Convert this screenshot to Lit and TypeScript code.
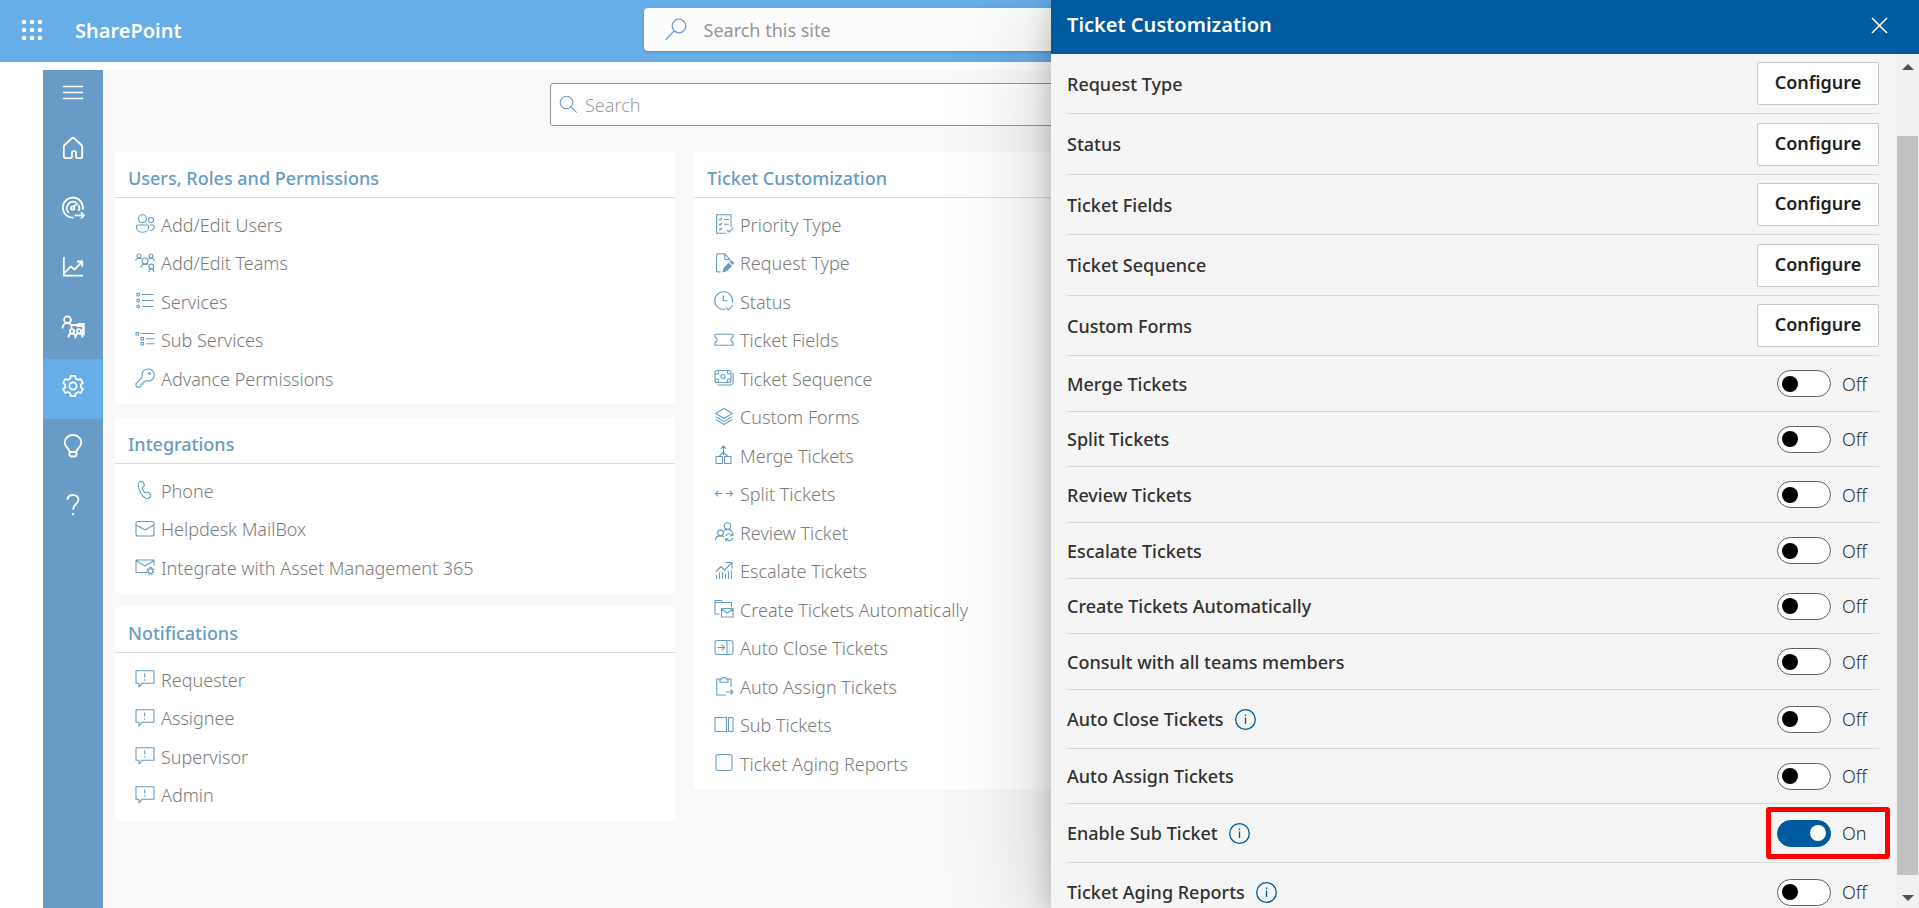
import { LitElement, html, css, svg, nothing } from "lit";
import { customElement, property, state } from "lit/decorators.js";
import { classMap } from "lit/directives/class-map.js";

/** Closed outline of a cog wheel with evenly spaced teeth. */
function cog(cx: number, cy: number, outer: number, inner: number, teeth: number, tip: number, root: number): string {
  const points: string[] = [];
  for (let i = 0; i < teeth; i++) {
    const mid = -90 + (360 / teeth) * i;
    for (const [offset, radius] of [[-root, inner], [-tip, outer], [tip, outer], [root, inner]]) {
      const a = ((mid + offset) * Math.PI) / 180;
      points.push(`${(cx + radius * Math.cos(a)).toFixed(2)} ${(cy + radius * Math.sin(a)).toFixed(2)}`);
    }
  }
  return `M${points.join("L")}Z`;
}

const icons: Record<string, unknown> = {
  menu: svg`<path d="M2 5.500h20M2 11.500h20M2 17.500h20"/>`,
  home: svg`<path d="M2.800 10.800c0-.7.3-1.300.8-1.800l7-6.500a2 2 0 0 1 2.800 0l7 6.500c.5.5.8 1.100.8 1.800v9.700a1.600 1.600 0 0 1-1.600 1.600h-3a1.600 1.600 0 0 1-1.600-1.600v-4.200a1.200 1.200 0 0 0-1.200-1.200h-1.600a1.200 1.200 0 0 0-1.200 1.200v4.200a1.600 1.600 0 0 1-1.600 1.600H4.400a1.600 1.600 0 0 1-1.600-1.600z"/>`,
  gauge: svg`<path d="M12.500 21.600A10 10 0 1 1 21.600 13.800"/><path d="M7.800 16.800a6.400 6.400 0 0 1 7.400-10.300M17.400 8.800a6.400 6.400 0 0 1 .3 6"/><circle cx="11.600" cy="12" r="1.700"/><path d="M12.900 10.700l3.800-3.900M13.500 19.300h9.500M20 16.300l3 3-3 3"/>`,
  trend: svg`<path d="M2.800 2v18.700H22M3.500 18l6.200-6.500 3.700 3 7.600-7.700M16 6.500h5.300v5.300"/>`,
  training: svg`<circle cx="6.500" cy="4.800" r="3.400"/><path d="M1.500 13.500c0-3 2-5.300 5-5.300 1.500 0 2.700.5 3.500 1.500M10.500 13.500v-3.500h6M17 9h5.800v11.500M17 9l-1 2h6M22 11v9"/><circle cx="11" cy="16.300" r="2.100"/><circle cx="18" cy="16.300" r="2.100"/><path d="M7.500 22.500c0-2.500 1.500-4 3.500-4s3.500 1.500 3.500 4c0-2.500 1.500-4 3.500-4s3.500 1.500 3.500 4"/>`,
  settings: svg`<path d=${cog(12, 12, 10.4, 8, 6, 13, 19)}/><circle cx="12" cy="12" r="3.600"/>`,
  bulb: svg`<path d="M8.500 17.500c0-3-4.800-4.300-4.800-9a8.300 7.500 0 0 1 16.600 0c0 4.700-4.800 6-4.800 9v3a2 2 0 0 1-2 2h-3a2 2 0 0 1-2-2zM8.500 18h7"/>`,
  help: svg`<path d="M6.500 6.800C6.500 3.800 8.800 2 12 2s5.500 1.900 5.500 4.700c0 4.500-5.500 4.500-5.500 9.800M12 20v2.200"/>`,
  waffle: svg`<g fill="currentColor" stroke="none">${[4, 12, 20].map((y) => [4, 12, 20].map((x) => svg`<circle cx=${x} cy=${y} r="2.300"/>`))}</g>`,
  siteSearch: svg`<circle cx="15" cy="8" r="6.800"/><path d="M10 13L1.500 22"/>`,
  search: svg`<circle cx="7.500" cy="7.500" r="6.300"/><path d="M12.200 12.200l5.500 5.500"/>`,
  close: svg`<path d="M2 2l15 15M17 2L2 17"/>`,

  users: svg`<circle cx="7.500" cy="4.800" r="4"/><circle cx="16" cy="6" r="2.500"/><path d="M2.700 11h9.600c.8 0 1.400.6 1.400 1.400 0 3.400-2.600 5.800-6.200 5.800s-6.200-2.400-6.200-5.800c0-.8.6-1.400 1.400-1.400zM15 11h3c.8 0 1.300.5 1.300 1.200 0 2.800-1.600 4.500-4.300 4.300"/>`,
  teams: svg`<circle cx="4" cy="3" r="2"/><circle cx="16" cy="3" r="2"/><path d="M.8 8c0-2 1.300-3 3.200-3 1.200 0 2 .4 2.500 1M19.200 8c0-2-1.300-3-3.200-3-1.200 0-2 .4-2.500 1M6 15c0-2.200 1.500-3.800 4-3.800s2.500.5 3 1"/><circle cx="10" cy="8" r="3"/><circle cx="16.300" cy="13.500" r="2.400"/><path d="M14 19v-1.500c0-1 .9-1.600 2.300-1.600s2.300.6 2.300 1.600V19"/>`,
  services: svg`<circle cx="3.200" cy="3.500" r="1.400"/><circle cx="3.200" cy="9.500" r="1.400"/><circle cx="3.200" cy="15.500" r="1.400"/><path d="M7 3.500h11.500M7 9.500h11.500M7 15.500h11.500"/>`,
  subServices: svg`<path d="M1 2.500h2.500V5H1zM6 7.500h2.500V10H6zM6 12.500h2.500V15H6zM5.500 3.500H19.500M11 8.700h8.500M11 13.700h8.500"/>`,
  key: svg`<path d="M13 1a6 6 0 1 1-1.800 11.600L9.500 14H8v2H6v2.200l-1 .9H2.500a1.500 1.500 0 0 1-1.500-1.500v-2l6.300-6.400A6 6 0 0 1 13 1z"/><circle cx="14.500" cy="5.600" r=".8"/>`,
  phone: svg`<path d="M5.300 1.600l1-.3c.8-.2 1.500.1 1.900.9l1 2.200c.3.700.1 1.500-.4 2L7.300 7.800c0 1.200 1.500 4.200 2.800 5l2-.6c.7-.2 1.400 0 1.900.6l1.400 2c.5.700.4 1.600-.2 2.200l-.8.800c-.9.900-2.300 1.200-3.500.7C6.700 16.500 3 9.500 3.300 4.400c.1-1.300.9-2.400 2-2.800z"/>`,
  mail: svg`<rect x="1" y="2.500" width="18" height="14.500" rx="2"/><path d="M1 6l9 5 9-5"/>`,
  mailSettings: svg`<path d="M19 8.500V3H1v12.500h11M1 3.500l9 5.500 9-5.500"/><circle cx="15.500" cy="14" r="2.400"/><path stroke-dasharray="1.500 1.450" d="M15.500 10.300a3.700 3.700 0 1 1-.01 0"/>`,
  alert: svg`<path d="M1 1.800h18v12.500H7L4 18v-3.700H1z"/><path d="M9.700 4.500v4M9.700 10.300v1.500"/>`,
  checklist: svg`<path d="M17 13V.8H2.600v18.400H12M5 5.200l1 1 2-2M5 10l1 1 2-2M5 15l1 1 2-2M10 5.500h5M10 10.300h5M13 16l2 2 4.300-4.300"/>`,
  documentEdit: svg`<path d="M6.500 19H4.500a2 2 0 0 1-2-2V2.800a2 2 0 0 1 2-2h6.200L16 6.500v1.800M10.700.8v4.300c0 .8.600 1.400 1.400 1.400H16"/><path fill="currentColor" stroke="none" d="M8.500 19.500l1.200-4.700 5-5 3.300 3.300-5 5zM15.600 9l1.200-1.100c.9-.8 2.200.4 2.700 1s.7 1.500 0 2.200l-.8.900z"/>`,
  clock: svg`<path d="M18.300 11.700A8.900 8.900 0 1 0 11 18.400M9.300 4.500v5.200h4M12 16.500l2.300 2.300 4.700-4.700"/>`,
  ticket: svg`<path d="M1 4.300h18v3.200c-1.300 0-2 1.100-2 2.200s.7 2.300 2 2.300v3.200H1V12c1.300 0 2-1.200 2-2.300s-.7-2.200-2-2.200z"/>`,
  money: svg`<rect x="1" y="2.500" width="16" height="12" rx="2"/><circle cx="9" cy="8.500" r="2"/><path d="M1 6h2c1 0 1.500-.6 1.500-1.500v-2M13.500 2.500v2c0 .9.500 1.500 1.500 1.500h2M1 11h2c1 0 1.500.6 1.500 1.500v2M13.500 14.500v-2c0-.9.500-1.500 1.500-1.500h2M3.500 17h12.300c2 0 3.400-1.400 3.400-3.400V5"/>`,
  layers: svg`<path d="M10 1.500l8.300 5-8.300 5-8.300-5zM1.700 9.600l8.300 5 8.300-5M1.700 12.500l8.300 5 8.300-5"/>`,
  merge: svg`<path d="M2 11.500h6.500v7H2zM10.500 11.500H17v7h-6.500zM9.500 10V1M6.700 3.800L9.500 1l2.800 2.800M5 11.500l4.500-4.300 4.500 4.300"/>`,
  split: svg`<path d="M8.500 9.500H1.500M4.300 6.700L1.500 9.500l2.800 2.800M11.500 9.500h7M15.700 6.700l2.800 2.800-2.800 2.800"/>`,
  review: svg`<circle cx="13.500" cy="4" r="3.200"/><circle cx="6.500" cy="11" r="2.900"/><path d="M1.500 18.500c0-2.800 2-4.600 5-4.600 1.600 0 2.700.5 3.500 1.300M10 8.500c1-.8 2.200-1.100 3.500-1.100 2.400 0 4.500 1.300 5 3.500M11.600 14c.8-1.500 2.100-2.200 3.700-2.200 1.400 0 2.400.5 3.300 1.500M18.900 11v2.600h-2.600M19 16c-.7 1.600-2 2.700-3.800 2.700-1.300 0-2.400-.6-3.200-1.500M11.700 19.500v-2.600h2.600"/>`,
  escalate: svg`<path d="M2 10.500l5-5 3.500 3.500L18 1.600M11.500 1.500h6.600v6.300M2.500 14v4M5.500 11.500V18M8.500 11.500V18M11.500 13V18M14.500 10.500V18M17.500 9.500V18"/>`,
  folderMail: svg`<path d="M5.500 15H1V1.500h6.500l1.500 2h8.500v5M1 3.500h8M7.500 9.500H19V18H7.500zM7.500 10l5.700 4 5.700-4"/>`,
  panelArrow: svg`<rect x="1" y="2.500" width="18" height="14" rx="2.500"/><path d="M13 2.500v14M3.500 9.500h7M7.700 6.700l2.800 2.800-2.800 2.800"/>`,
  clipboardArrow: svg`<path d="M12 19H2.800V3H6M14 3h3v8M6 3h1.800a2.300 2.300 0 0 1 4.400 0H14v3.200H6zM11.500 16H19M16.500 13.500L19 16l-2.500 2.500"/>`,
  sidePanel: svg`<path d="M1 2.500h11.500v14H1zM14.500 2.500H19v14h-4.500z"/>`,
  square: svg`<rect x="2" y="1.500" width="16" height="16" rx="2.500"/>`,
};

@customElement("app-icon")
class AppIcon extends LitElement {
  @property() name = "";
  @property({ type: Number }) box = 20;
  @property({ type: Number }) stroke = 1.1;

  static styles = css`
    :host {
      display: block;
      flex: none;
      line-height: 0;
    }
    svg {
      fill: none;
      stroke: currentColor;
      stroke-linejoin: round;
      overflow: visible;
    }
  `;

  render() {
    return html`<svg width=${this.box} height=${this.box} viewBox="0 0 ${this.box} ${this.box}" stroke-width=${this.stroke} aria-hidden="true">
      ${icons[this.name]}
    </svg>`;
  }
}

interface Entry {
  icon: string;
  label: string;
}
interface Group {
  title: string;
  entries: Entry[];
}

@customElement("settings-card")
class SettingsCard extends LitElement {
  @property({ attribute: false }) group!: Group;

  static styles = css`
    :host {
      display: block;
      background: #fff;
    }
    h2 {
      margin: 0;
      padding: 8px 13px 0;
      border-bottom: 1px solid #dcdcdc;
      font-size: 18px;
      font-weight: 500;
      line-height: 37px;
      color: #669cc5;
    }
    ul {
      list-style: none;
      margin: 0;
      padding: 7px 0;
    }
    li {
      height: 38px;
      padding-left: 20px;
      display: flex;
    }
    li:nth-child(even) {
      height: 39px;
    }
    a {
      display: flex;
      align-items: center;
      gap: 6px;
      color: #7c7c7c;
      font-weight: 300;
      text-decoration: none;
      white-space: nowrap;
    }
    span {
      padding-top: 1px;
    }
    app-icon {
      color: #669cc5;
    }
  `;

  render() {
    return html`
      <h2>${this.group.title}</h2>
      <ul>
        ${this.group.entries.map(
          (e) => html`<li><a href="#"><app-icon name=${e.icon}></app-icon><span>${e.label}</span></a></li>`
        )}
      </ul>
    `;
  }
}

interface Setting {
  label: string;
  kind: "configure" | "toggle";
  on?: boolean;
  info?: boolean;
  marked?: boolean;
}

@customElement("settings-panel")
class SettingsPanel extends LitElement {
  @state() private settings: Setting[] = [
    ...["Request Type", "Status", "Ticket Fields", "Ticket Sequence", "Custom Forms"].map(
      (label): Setting => ({ label, kind: "configure" })
    ),
    { label: "Merge Tickets", kind: "toggle" },
    { label: "Split Tickets", kind: "toggle" },
    { label: "Review Tickets", kind: "toggle" },
    { label: "Escalate Tickets", kind: "toggle" },
    { label: "Create Tickets Automatically", kind: "toggle" },
    { label: "Consult with all teams members", kind: "toggle" },
    { label: "Auto Close Tickets", kind: "toggle", info: true },
    { label: "Auto Assign Tickets", kind: "toggle" },
    { label: "Enable Sub Ticket", kind: "toggle", info: true, on: true, marked: true },
    { label: "Ticket Aging Reports", kind: "toggle", info: true },
  ];

  static styles = css`
    :host {
      display: flex;
      flex-direction: column;
      background: #f5f5f5;
      color: #323130;
      box-shadow: 0 26px 100px rgba(0, 0, 0, 0.22), 0 5px 24px rgba(0, 0, 0, 0.2);
    }
    .header {
      flex: none;
      height: 54px;
      box-sizing: border-box;
      padding: 0 27px 4px 16px;
      display: flex;
      align-items: center;
      justify-content: space-between;
      background: #005a9e;
      color: #fff;
    }
    h1 {
      margin: 0;
      font-size: 20px;
      font-weight: 600;
      line-height: 28px;
    }
    .close {
      border: 0;
      background: none;
      color: inherit;
      padding: 3px;
    }
    .body {
      flex: 1;
      min-height: 0;
      display: flex;
    }
    ul {
      flex: 1;
      list-style: none;
      margin: 0;
      padding: 0 16px;
      overflow: hidden;
    }
    .row {
      display: flex;
      align-items: center;
      justify-content: space-between;
      box-sizing: border-box;
      height: 56px;
      border-bottom: 1px solid #d8d8d8;
    }
    .row:nth-child(3n + 1) {
      height: 55px;
    }
    .row.info {
      height: 59px;
    }
    .row.configure {
      height: 60px;
    }
    .row.configure:nth-child(even) {
      height: 61px;
    }
    .name {
      display: flex;
      align-items: center;
      gap: 11px;
      font-weight: 500;
    }
    .configure-button {
      width: 122px;
      height: 43px;
      padding: 0 0 3px;
      border: 1px solid #c8c8c8;
      border-radius: 2px;
      background: #fff;
      color: #201f1e;
      font: inherit;
      font-weight: 600;
    }
    .info-button {
      display: block;
      padding: 0;
      border: 0;
      background: none;
      color: #005a9e;
    }
    .info-button svg {
      display: block;
      fill: none;
      stroke: currentColor;
    }
    .control {
      position: relative;
      width: 102px;
      display: flex;
      align-items: center;
      gap: 11px;
      font-weight: 300;
    }
    .switch {
      appearance: none;
      flex: none;
      display: flex;
      align-items: center;
      box-sizing: border-box;
      width: 54px;
      height: 27px;
      margin: 0;
      padding: 0 4px;
      border: 1px solid #605e5c;
      border-radius: 14px;
      background: #fff;
    }
    .switch::before {
      content: "";
      width: 16px;
      height: 16px;
      border-radius: 50%;
      background: #000;
    }
    .switch:checked {
      justify-content: flex-end;
      background: #005a9e;
      border-color: #005a9e;
    }
    .switch:checked::before {
      background: #fff;
    }
    .marker {
      position: absolute;
      inset: -13px -11px -12px;
      border: 5px solid #fe0000;
      border-radius: 3px;
      pointer-events: none;
    }
    .scrollbar {
      flex: none;
      width: 24px;
      box-sizing: border-box;
      padding: 0 1px 0 2px;
      display: grid;
      grid-template-rows: 26px 56fr 739fr 12fr 21px;
      justify-items: center;
      align-items: center;
      background: #f1f1f1;
      color: #505050;
    }
    .thumb {
      grid-row: 3;
      justify-self: stretch;
      align-self: stretch;
      background: #c1c1c1;
    }
    .arrow {
      fill: currentColor;
    }
    .down {
      grid-row: 5;
    }
  `;

  private flip(index: number) {
    this.settings = this.settings.map((s, i) => (i === index ? { ...s, on: !s.on } : s));
  }

  private renderRow(s: Setting, i: number) {
    const id = `setting-${i}`;
    return html`<li class=${classMap({ row: true, configure: s.kind === "configure", info: !!s.info })}>
      <div class="name">
        <label for=${id}>${s.label}</label>
        ${s.info
          ? html`<button class="info-button" aria-label="About this setting">
              <svg width="21" height="21" viewBox="0 0 21 21" stroke-width="1.300">
                <circle cx="10.500" cy="10.500" r="9.800" />
                <path d="M10.500 8.500v6.500M10.500 5.500v1.500" />
              </svg>
            </button>`
          : nothing}
      </div>
      ${s.kind === "configure"
        ? html`<button id=${id} class="configure-button">Configure</button>`
        : html`<div class="control">
            <input id=${id} class="switch" type="checkbox" role="switch" .checked=${!!s.on} @change=${() => this.flip(i)} />
            <span>${s.on ? "On" : "Off"}</span>
            ${s.marked ? html`<div class="marker"></div>` : nothing}
          </div>`}
    </li>`;
  }

  render() {
    return html`
      <header class="header">
        <h1>Ticket Customization</h1>
        <button class="close" aria-label="Close"><app-icon name="close" box="19" stroke="1.5"></app-icon></button>
      </header>
      <div class="body">
        <ul>
          ${this.settings.map((s, i) => this.renderRow(s, i))}
        </ul>
        <div class="scrollbar">
          <svg class="arrow" width="12" height="6" viewBox="0 0 12 6"><path d="M0 6l6-6 6 6z" /></svg>
          <div class="thumb"></div>
          <svg class="arrow down" width="12" height="6" viewBox="0 0 12 6"><path d="M0 0l6 6 6-6z" /></svg>
        </div>
      </div>
    `;
  }
}

@customElement("app-root")
class AppRoot extends LitElement {
  private nav = ["home", "gauge", "trend", "training", "settings", "bulb", "help"];

  private left: Group[] = [
    {
      title: "Users, Roles and Permissions",
      entries: [
        { icon: "users", label: "Add/Edit Users" },
        { icon: "teams", label: "Add/Edit Teams" },
        { icon: "services", label: "Services" },
        { icon: "subServices", label: "Sub Services" },
        { icon: "key", label: "Advance Permissions" },
      ],
    },
    {
      title: "Integrations",
      entries: [
        { icon: "phone", label: "Phone" },
        { icon: "mail", label: "Helpdesk MailBox" },
        { icon: "mailSettings", label: "Integrate with Asset Management 365" },
      ],
    },
    {
      title: "Notifications",
      entries: ["Requester", "Assignee", "Supervisor", "Admin"].map((label) => ({ icon: "alert", label })),
    },
  ];

  private tickets: Group = {
    title: "Ticket Customization",
    entries: [
      { icon: "checklist", label: "Priority Type" },
      { icon: "documentEdit", label: "Request Type" },
      { icon: "clock", label: "Status" },
      { icon: "ticket", label: "Ticket Fields" },
      { icon: "money", label: "Ticket Sequence" },
      { icon: "layers", label: "Custom Forms" },
      { icon: "merge", label: "Merge Tickets" },
      { icon: "split", label: "Split Tickets" },
      { icon: "review", label: "Review Ticket" },
      { icon: "escalate", label: "Escalate Tickets" },
      { icon: "folderMail", label: "Create Tickets Automatically" },
      { icon: "panelArrow", label: "Auto Close Tickets" },
      { icon: "clipboardArrow", label: "Auto Assign Tickets" },
      { icon: "sidePanel", label: "Sub Tickets" },
      { icon: "square", label: "Ticket Aging Reports" },
    ],
  };

  static styles = css`
    :host {
      position: relative;
      display: flex;
      flex-direction: column;
      height: 100vh;
      overflow: hidden;
      background: #fff;
      font-family: "Noto Sans", "Open Sans", sans-serif;
      font-size: 18px;
      line-height: 24px;
    }
    .topbar {
      flex: none;
      height: 62px;
      box-sizing: border-box;
      padding: 0 20px;
      display: grid;
      grid-template-columns: 1fr minmax(0, 632px) 1fr;
      align-items: center;
      background: #67ade7;
      color: #fff;
    }
    .brand {
      display: flex;
      align-items: center;
      gap: 31px;
      font-size: 20px;
      font-weight: 600;
    }
    .waffle {
      border: 0;
      padding: 0 0 3px;
      background: none;
      color: inherit;
    }
    .search {
      display: flex;
      align-items: center;
      box-sizing: border-box;
      height: 43px;
      background: #fff;
    }
    .search input {
      flex: 1;
      min-width: 0;
      padding: 0;
      border: 0;
      outline: 0;
      background: none;
      font: inherit;
      color: #858585;
    }
    .site-search {
      gap: 16px;
      margin-bottom: 3px;
      padding: 0 20px;
      border-radius: 4px;
      background: #fcfcfc;
      box-shadow: 0 1px 3px rgba(0, 0, 0, 0.2);
      color: #6f9fdc;
    }
    .site-search input::placeholder {
      color: #969696;
      opacity: 1;
    }
    .settings-search {
      gap: 7px;
      max-width: 848px;
      margin: 13px auto 26px;
      padding: 0 8px;
      border: 1px solid #959595;
      border-radius: 3px;
      color: #669cc5;
      font-weight: 300;
    }
    .settings-search input::placeholder {
      color: #a0a0a0;
      opacity: 1;
    }
    .workspace {
      flex: 1;
      min-height: 0;
      display: flex;
      margin: 8px 74px 0 43px;
      background: #f9f9f9;
    }
    nav {
      flex: none;
      width: 60px;
      display: flex;
      flex-direction: column;
      background: #689cc6;
      color: #fff;
    }
    .nav-item {
      flex: none;
      height: 59px;
      box-sizing: border-box;
      padding: 0 0 6px;
      border: 0;
      background: none;
      color: inherit;
      display: flex;
      align-items: center;
      justify-content: center;
    }
    .nav-item:nth-child(even) {
      height: 60px;
    }
    .nav-item.menu {
      height: 51px;
    }
    .nav-item.active {
      background: #67ade7;
      border-radius: 3px;
    }
    main {
      flex: 1;
      min-width: 0;
      padding: 0 12px;
    }
    .columns {
      display: grid;
      grid-template-columns: repeat(3, minmax(0, 1fr));
      gap: 19px;
      align-items: start;
    }
    .stack {
      display: grid;
      gap: 14px;
    }
    settings-panel {
      position: absolute;
      top: 0;
      right: 0;
      bottom: 0;
      width: 868px;
      max-width: 100%;
    }
  `;

  render() {
    return html`
      <header class="topbar">
        <div class="brand">
          <button class="waffle" aria-label="App launcher"><app-icon name="waffle" box="24"></app-icon></button>
          <span>SharePoint</span>
        </div>
        <label class="search site-search">
          <app-icon name="siteSearch" box="24" stroke="1.3"></app-icon>
          <input type="search" placeholder="Search this site" aria-label="Search this site" />
        </label>
      </header>
      <div class="workspace">
        <nav>
          <button class="nav-item menu" aria-label="Menu"><app-icon name="menu" box="24" stroke="1.6"></app-icon></button>
          ${this.nav.map(
            (name) => html`<button class=${classMap({ "nav-item": true, active: name === "settings" })} aria-label=${name}>
              <app-icon name=${name} box="24" stroke="1.8"></app-icon>
            </button>`
          )}
        </nav>
        <main>
          <label class="search settings-search">
            <app-icon name="search" box="19"></app-icon>
            <input type="search" placeholder="Search" aria-label="Search" />
          </label>
          <div class="columns">
            <div class="stack">${this.left.map((g) => html`<settings-card .group=${g}></settings-card>`)}</div>
            <settings-card .group=${this.tickets}></settings-card>
          </div>
        </main>
      </div>
      <settings-panel></settings-panel>
    `;
  }
}
